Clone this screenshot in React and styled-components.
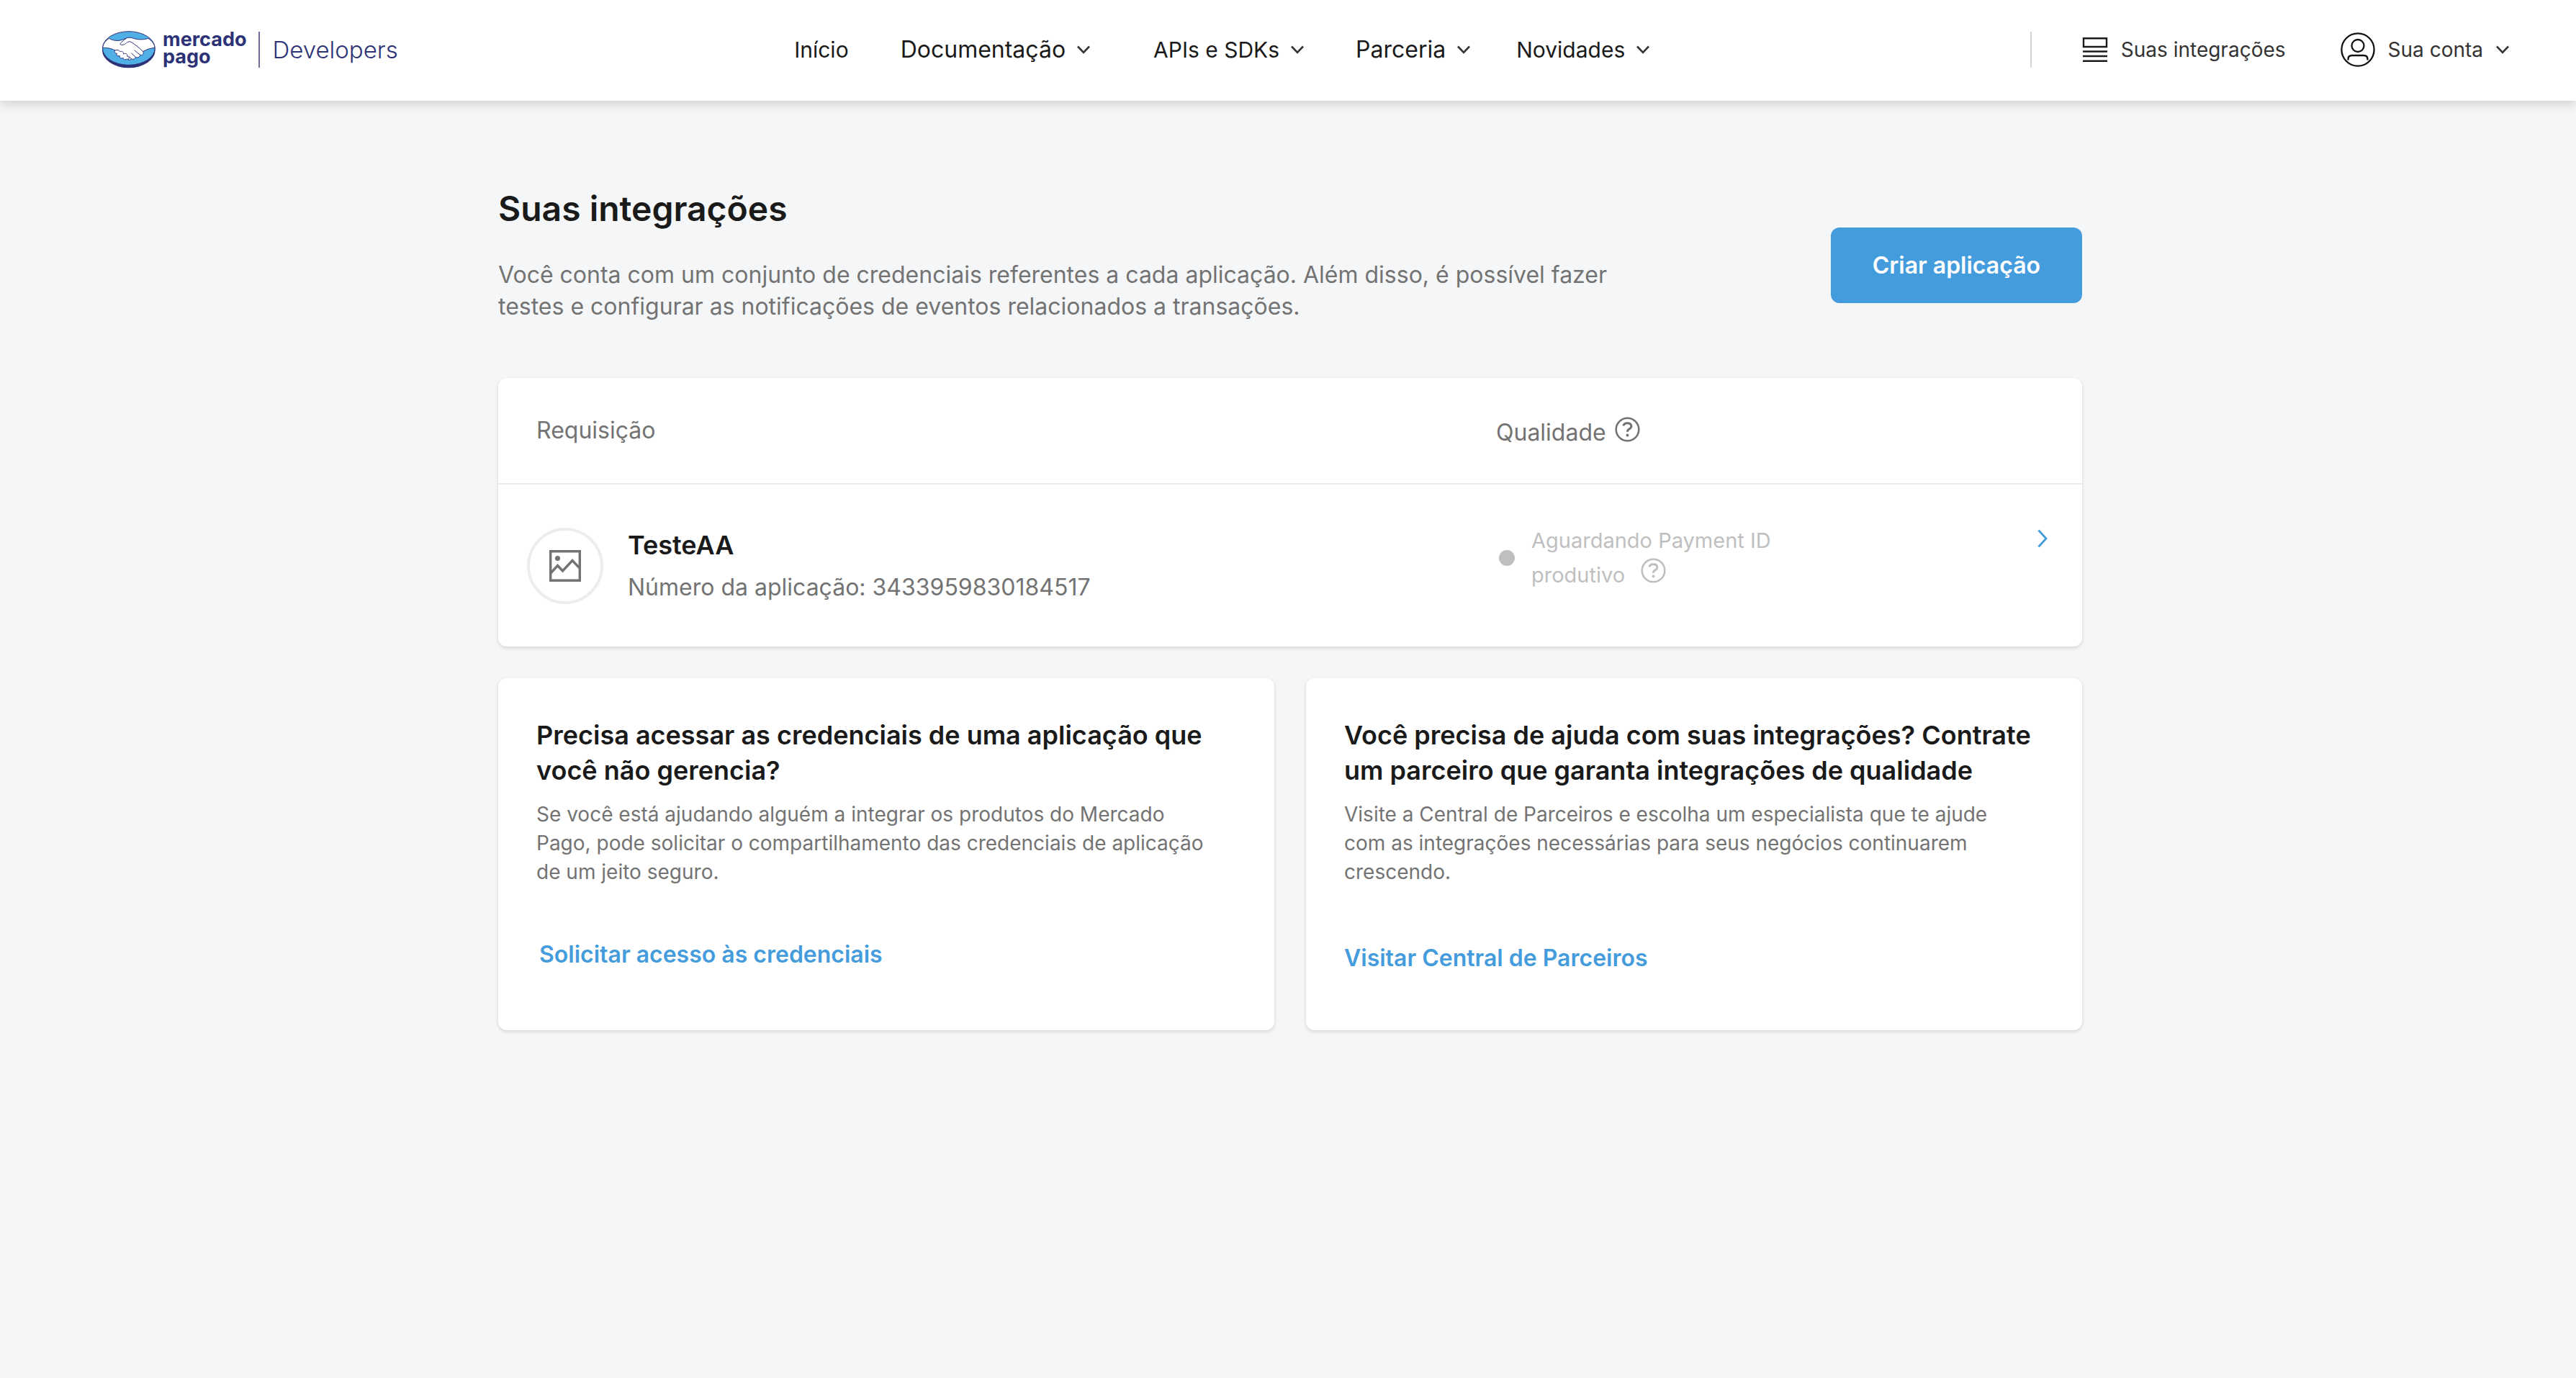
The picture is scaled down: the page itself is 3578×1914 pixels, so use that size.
import React from 'react';
import styled, { createGlobalStyle } from 'styled-components';

const GlobalStyle = createGlobalStyle`
  *, *::before, *::after { box-sizing: border-box; }
  body {
    margin: 0;
    min-height: 100vh;
    background: #f5f6f8;
    color: #1a1a1a;
    font-family: Inter, Roboto, sans-serif;
    font-size: 32px;
  }
  a { color: inherit; text-decoration: none; }
  button { font: inherit; color: inherit; border: 0; background: none; padding: 0; cursor: pointer; }
  h1, h2, p, ul { margin: 0; padding: 0; }
  svg { display: block; flex: none; }
`;

/* Header */

const Header = styled.header`
  display: flex;
  align-items: center;
  justify-content: space-between;
  height: 140px;
  padding: 0 93px 3px 141px;
  background: #fff;
  box-shadow: 0 2px 16px rgba(0, 0, 0, 0.2);
`;

const Brand = styled.a`
  display: flex;
  align-items: center;
  color: #2d3277;
`;

const BrandName = styled.span`
  display: flex;
  flex-direction: column;
  margin-left: 9px;
  padding: 0 17px 4px 0;
  font-size: 27px;
  font-weight: 700;
  line-height: 24px;
`;

const BrandArea = styled.span`
  padding-left: 17px;
  border-left: 2px solid #6c70a0;
  font-size: 33px;
  font-weight: 300;
  line-height: 50px;
`;

const Nav = styled.ul`
  display: flex;
  align-items: center;
  gap: 64px;
  padding-left: 22px;
  list-style: none;
`;

const NavItem = styled.li`
  margin-left: ${(p) => p.$lead || 0}px;
`;

const NavLink = styled.a`
  font-size: 30px;
  line-height: 40px;
`;

const MenuButton = styled.button`
  display: flex;
  align-items: center;
  gap: 16px;
  font-size: ${(p) => (p.$large ? 32 : 30)}px;
  line-height: 40px;
`;

const Account = styled.div`
  display: flex;
  align-items: center;
  gap: 76px;
  padding-left: 70px;
  border-left: 2px solid #d5d5d5;
  height: 50px;
`;

const AccountLink = styled.a`
  display: flex;
  align-items: center;
  gap: 18px;
  color: #333;
  font-size: 28px;
`;

const AccountButton = styled.button`
  display: flex;
  align-items: center;
  gap: 18px;
  color: #333;
  font-size: 28px;
`;

/* Page */

const Main = styled.main`
  max-width: 2206px;
  margin: 0 auto;
  padding: 120px 0 0 6px;
`;

const Intro = styled.section`
  display: flex;
  align-items: flex-end;
  justify-content: space-between;
  margin-bottom: 77px;
`;

const Title = styled.h1`
  margin-bottom: 40px;
  font-size: 48px;
  font-weight: 600;
  line-height: 60px;
`;

const Lead = styled.p`
  max-width: 1600px;
  color: #737373;
  line-height: 44px;
`;

const PrimaryButton = styled.button`
  margin-bottom: 27px;
  padding: 1px 58px 0;
  border-radius: 12px;
  background: #459cdd;
  color: #fff;
  font-weight: 600;
  line-height: 104px;
`;

const Card = styled.section`
  border-radius: 12px;
  background: #fff;
  box-shadow: 0 2px 5px rgba(0, 0, 0, 0.14);
`;

const Table = styled.table`
  width: 100%;
  table-layout: fixed;
  border-collapse: collapse;
  color: #737373;
`;

const AppColumn = styled.col`
  width: 63%;
`;

const LinkColumn = styled.col`
  width: 140px;
`;

const HeadCell = styled.th`
  height: 147px;
  padding: 0 0 0 ${(p) => (p.$first ? 53 : 0)}px;
  border-bottom: 2px solid #ededed;
  font-weight: 400;
  line-height: 44px;
  text-align: left;
`;

const HeadLabel = styled.span`
  display: flex;
  align-items: flex-start;
  gap: 12px;
  padding-top: 6px;
`;

const Cell = styled.td`
  height: 226px;
  padding: 0;
`;

const AppInfo = styled.div`
  display: flex;
  align-items: center;
  gap: 34px;
  padding-left: 40px;
`;

const AppAvatar = styled.span`
  display: grid;
  place-items: center;
  width: 106px;
  height: 106px;
  border: 4px solid #ededed;
  border-radius: 50%;
`;

const AppName = styled.p`
  color: #1a1a1a;
  font-size: 36px;
  font-weight: 600;
  line-height: 60px;
`;

const AppNumber = styled.p`
  line-height: 58px;
`;

const Quality = styled.div`
  display: flex;
  align-items: center;
  gap: 23px;
  padding: 0 0 22px 4px;
  color: #bfbfbf;
  font-size: 29px;
  line-height: 48px;
`;

const QualityText = styled.p`
  max-width: 360px;
`;

const QualityLine = styled.span`
  display: flex;
  align-items: flex-start;
  gap: 22px;
`;

const StatusDot = styled.span`
  flex: none;
  width: 22px;
  height: 22px;
  border-radius: 50%;
  background: currentColor;
`;

const HelpButton = styled.button`
  display: flex;
`;

const DetailLink = styled.a`
  display: flex;
  justify-content: flex-end;
  padding: 0 48px 76px 0;
  color: #459cdd;
`;

const HelpCards = styled.div`
  display: grid;
  grid-template-columns: 1fr 1fr;
  gap: 44px;
  margin-top: 44px;
`;

const HelpCard = styled(Card)`
  padding: 55px 53px 80px;
`;

const CardTitle = styled.h2`
  margin-bottom: 16px;
  font-size: 36px;
  font-weight: 600;
  line-height: 49px;
`;

const CardText = styled.p`
  max-width: 950px;
  color: #737373;
  font-size: 28px;
  line-height: 40px;
`;

const CardLink = styled.a`
  display: inline-block;
  margin-top: 80px;
  color: #459cdd;
  font-weight: 600;
  line-height: 40px;
`;

const CardButton = styled.button`
  display: block;
  margin-top: 75px;
  padding: 0 4px;
  color: #459cdd;
  font-weight: 600;
  line-height: 40px;
`;

/* Icons */

const Handshake = () => (
  <svg width="76" height="52" viewBox="12 15 228 156" aria-hidden="true">
    <ellipse cx="125.500" cy="95" rx="110.500" ry="74" fill="#2d3277" />
    <ellipse cx="125.500" cy="87" rx="109" ry="70" fill="#50b0e6" stroke="#2d3277" strokeWidth="3" />
    <path
      d="M43 46C62 57 84 58 104 50C116 43 128 41 140 44C162 52 184 53 207 46C223 57 233 70 234 85C215 87 199 92 185 101C190 110 182 117 173 115C172 124 163 128 154 124C151 133 143 135 136 131C132 138 122 137 119 131C112 137 103 134 103 128C94 131 86 126 88 119C78 121 72 114 76 109C67 108 64 101 69 96C56 89 37 84 17 85C18 70 28 56 43 46Z"
      fill="#fff" stroke="#2d3277" strokeWidth="3" strokeLinejoin="round"
    />
    <g fill="none" stroke="#2d3277" strokeWidth="3" strokeLinecap="round" strokeLinejoin="round">
      <path d="M114 47C103 51 98 62 89 68C91 76 105 74 112 68C120 61 127 57 135 61C153 72 170 86 185 101" />
      <path d="M69 96C77 92 87 95 88 101C98 98 106 104 103 111C113 106 122 112 119 121C127 120 129 127 124 134" />
      <path d="M154 124L137 108M173 115L150 96M136 131L128 122" />
    </g>
  </svg>
);

const ChevronDown = () => (
  <svg width="18" height="12" viewBox="0 0 18 12" fill="none" stroke="#333" strokeWidth="2.600" aria-hidden="true">
    <path d="M1 1.500L9 9.800L17 1.500" />
  </svg>
);

const ChevronRight = () => (
  <svg width="14" height="26" viewBox="0 0 14 26" fill="none" stroke="currentColor" strokeWidth="2.800" aria-hidden="true">
    <path d="M1.500 1.500L12 13L1.500 24.500" />
  </svg>
);

const ListIcon = () => (
  <svg width="36" height="36" viewBox="0 0 36 36" fill="none" stroke="#1a1a1a" strokeWidth="2.400" aria-hidden="true">
    <path d="M2 2.200H34V14H2ZM1 20.500H35M1 27H35M1 33.800H35" />
  </svg>
);

const UserIcon = () => (
  <svg width="48" height="48" viewBox="0 0 48 48" fill="none" stroke="#111" strokeWidth="2.300" aria-hidden="true">
    <circle cx="24" cy="24" r="22.600" />
    <circle cx="24" cy="18.500" r="8.500" />
    <path d="M10.500 38.500V37Q10.500 32 16 32H32Q37.500 32 37.500 37V38.500" />
  </svg>
);

const HelpIcon = () => (
  <svg width="35" height="35" viewBox="0 0 35 35" fill="none" stroke="currentColor" aria-hidden="true">
    <circle cx="17.500" cy="17.500" r="15.800" strokeWidth="2.600" />
    <path d="M12 12.500Q12.500 8.800 17.500 8.800Q22.800 8.800 22.800 13Q22.800 15.500 20 16.800Q17.500 18 17.500 20.800" strokeWidth="3" />
    <circle cx="17.500" cy="25.500" r="2" fill="currentColor" stroke="none" />
  </svg>
);

const ImageIcon = () => (
  <svg width="44" height="44" viewBox="0 0 44 44" fill="none" stroke="#737373" strokeWidth="3.400" aria-hidden="true">
    <path d="M1.700 1.700H42.300V42.300H1.700Z" />
    <path d="M2 32L11.500 21.500L18.500 29L32 14.500L42 25" />
    <circle cx="11.500" cy="11.500" r="3.600" fill="#737373" stroke="none" />
  </svg>
);

const menus = [
  { label: 'Documentação', large: true, lead: 8 },
  { label: 'APIs e SDKs', lead: 24 },
  { label: 'Parceria', large: true, lead: 8 },
  { label: 'Novidades' },
];

export default function App() {
  return (
    <>
      <GlobalStyle />
      <Header>
        <Brand href="#">
          <Handshake />
          <BrandName><span>mercado</span><span>pago</span></BrandName>
          <BrandArea>Developers</BrandArea>
        </Brand>
        <nav>
          <Nav>
            <NavItem><NavLink href="#">Início</NavLink></NavItem>
            {menus.map((m) => (
              <NavItem key={m.label} $lead={m.lead}>
                <MenuButton type="button" $large={m.large}>{m.label}<ChevronDown /></MenuButton>
              </NavItem>
            ))}
          </Nav>
        </nav>
        <Account>
          <AccountLink href="#"><ListIcon />Suas integrações</AccountLink>
          <AccountButton type="button"><UserIcon />Sua conta<ChevronDown /></AccountButton>
        </Account>
      </Header>

      <Main>
        <Intro>
          <div>
            <Title>Suas integrações</Title>
            <Lead>
              Você conta com um conjunto de credenciais referentes a cada aplicação. Além disso, é possível fazer
              testes e configurar as notificações de eventos relacionados a transações.
            </Lead>
          </div>
          <PrimaryButton type="button">Criar aplicação</PrimaryButton>
        </Intro>

        <Card>
          <Table>
            <colgroup>
              <AppColumn />
              <col />
              <LinkColumn />
            </colgroup>
            <thead>
              <tr>
                <HeadCell $first>Requisição</HeadCell>
                <HeadCell colSpan={2}>
                  <HeadLabel>
                    Qualidade
                    <HelpButton type="button" aria-label="Ajuda"><HelpIcon /></HelpButton>
                  </HeadLabel>
                </HeadCell>
              </tr>
            </thead>
            <tbody>
              <tr>
                <Cell>
                  <AppInfo>
                    <AppAvatar><ImageIcon /></AppAvatar>
                    <div>
                      <AppName>TesteAA</AppName>
                      <AppNumber>Número da aplicação: 3433959830184517</AppNumber>
                    </div>
                  </AppInfo>
                </Cell>
                <Cell>
                  <Quality>
                    <StatusDot />
                    <QualityText>
                      Aguardando Payment ID
                      <QualityLine>
                        produtivo
                        <HelpButton type="button" aria-label="Ajuda"><HelpIcon /></HelpButton>
                      </QualityLine>
                    </QualityText>
                  </Quality>
                </Cell>
                <Cell>
                  <DetailLink href="#" aria-label="Ver TesteAA"><ChevronRight /></DetailLink>
                </Cell>
              </tr>
            </tbody>
          </Table>
        </Card>

        <HelpCards>
          <HelpCard>
            <CardTitle>Precisa acessar as credenciais de uma aplicação que você não gerencia?</CardTitle>
            <CardText>
              Se você está ajudando alguém a integrar os produtos do Mercado Pago, pode solicitar o
              compartilhamento das credenciais de aplicação de um jeito seguro.
            </CardText>
            <CardButton type="button">Solicitar acesso às credenciais</CardButton>
          </HelpCard>
          <HelpCard>
            <CardTitle>Você precisa de ajuda com suas integrações? Contrate um parceiro que garanta integrações de qualidade</CardTitle>
            <CardText>
              Visite a Central de Parceiros e escolha um especialista que te ajude com as integrações
              necessárias para seus negócios continuarem crescendo.
            </CardText>
            <CardLink href="#">Visitar Central de Parceiros</CardLink>
          </HelpCard>
        </HelpCards>
      </Main>
    </>
  );
}
